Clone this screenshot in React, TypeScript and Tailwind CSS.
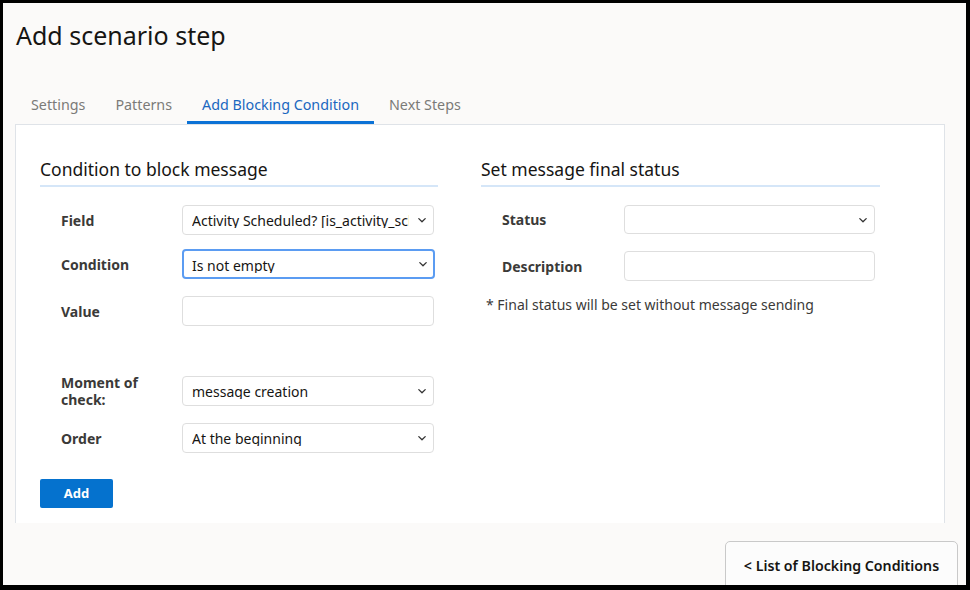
import React from "react";

const Chevron = () => (
  <svg width="10" height="10" viewBox="0 0 10 10" className="shrink-0">
    <path d="M1.8 3.6 L5 6.8 L8.2 3.6" fill="none" stroke="#333" strokeWidth="1.3" strokeLinecap="round" strokeLinejoin="round" />
  </svg>
);

function Select({ value, focus, w, h = "h-[30px]" }: { value?: string; focus?: boolean; w: string; h?: string }) {
  return (
    <div
      className={`${w} ${h} shrink-0 rounded-[4px] bg-white flex items-start overflow-hidden ${
        focus ? "border-2 border-[#5b9cf2] pl-[8px] pr-[5px]" : "border border-[#dedede] pl-[9px] pr-[6px]"
      }`}
    >
      <div className="w-[217px] h-[22px] overflow-hidden whitespace-nowrap text-[14px] leading-[20px] text-[#161513] pt-[5px]">
        {value}
      </div>
      <div className="ml-auto h-full flex items-center">
        <Chevron />
      </div>
    </div>
  );
}

function Input({ w }: { w: string }) {
  return <div className={`${w} h-[30px] shrink-0 rounded-[4px] bg-white border border-[#dedede]`} />;
}

function Row({ label, children, lw, mt }: { label: React.ReactNode; children: React.ReactNode; lw: string; mt: string }) {
  return (
    <div className={`flex items-center pl-[21px] ${mt}`}>
      <div className={`${lw} shrink-0 text-[14px] leading-[17px] font-bold text-[#3b3a38]`}>{label}</div>
      {children}
    </div>
  );
}

export default function App() {
  const tabs = ["Settings", "Patterns", "Add Blocking Condition", "Next Steps"];
  return (
    <div
      className="w-[970px] h-[590px] box-border border-t-[3px] border-l-[3px] border-r-[4px] border-b-[5px] border-black bg-[#fbfaf9] overflow-hidden flex flex-col"
      style={{ fontFamily: '"Noto Sans", "Open Sans", sans-serif' }}
    >
      <h1 className="shrink-0 pl-[13px] pt-[16px] text-[25px] leading-[32px] text-[#161513] font-normal">Add scenario step</h1>

      <div className="shrink-0 flex pl-[13px] mt-[36px] h-[37px] items-stretch">
        {tabs.map((t, i) => (
          <div
            key={t}
            className={`px-[15px] pt-[8px] text-[14.3px] leading-[20px] ${
              i === 2 ? "text-[#1a67c0] border-b-[3px] border-[#0b72d6]" : "text-[#7b7a78]"
            }`}
          >
            {t}
          </div>
        ))}
      </div>

      <div className="shrink-0 ml-[12px] w-[930px] h-[399px] bg-white border-l border-r border-t border-[#dfe3e8] flex pl-[24px] pt-[33px] gap-[43px]">
        {/* Left column */}
        <div className="w-[398px] flex flex-col">
          <div className="text-[17.5px] leading-[22px] text-[#161513] pb-[5px] border-b-2 border-[#d5e6f8]">
            Condition to block message
          </div>
          <Row label="Field" lw="w-[121px]" mt="mt-[18px]">
            <Select w="w-[252px]" value="Activity Scheduled? [is_activity_scheduled]" />
          </Row>
          <Row label="Condition" lw="w-[121px]" mt="mt-[14px]">
            <Select w="w-[253px]" value="Is not empty" focus />
          </Row>
          <Row label="Value" lw="w-[121px]" mt="mt-[17px]">
            <Input w="w-[252px]" />
          </Row>
          <Row label={<>Moment of<br />check:</>} lw="w-[121px]" mt="mt-[48px]">
            <Select w="w-[252px]" value="message creation" />
          </Row>
          <Row label="Order" lw="w-[121px]" mt="mt-[15px]">
            <Select w="w-[252px]" value="At the beginning" />
          </Row>
          <div className="mt-[26px]">
            <button className="w-[73px] h-[29px] rounded-[2px] bg-[#0572ce] text-white text-[13px] font-bold">Add</button>
          </div>
        </div>

        {/* Right column */}
        <div className="w-[399px] flex flex-col">
          <div className="text-[17.5px] leading-[22px] text-[#161513] pb-[5px] border-b-2 border-[#d5e6f8]">
            Set message final status
          </div>
          <Row label="Status" lw="w-[122px]" mt="mt-[18px]">
            <Select w="w-[251px]" h="h-[29px]" />
          </Row>
          <Row label="Description" lw="w-[122px]" mt="mt-[17px]">
            <Input w="w-[251px]" />
          </Row>
          <div className="pl-[5px] mt-[15px] text-[14px] leading-[18px] text-[#3b3a38]">
            * Final status will be set without message sending
          </div>
        </div>
      </div>

      <div className="shrink-0 flex justify-end pr-[8px] pt-[18px]">
        <button className="shrink-0 w-[233px] h-[52px] rounded-[5px] border border-[#c9c9c9] bg-[#fcfcfc] text-[14.2px] font-semibold text-[#161513] pb-[2px]">
          &lt; List of Blocking Conditions
        </button>
      </div>
    </div>
  );
}
